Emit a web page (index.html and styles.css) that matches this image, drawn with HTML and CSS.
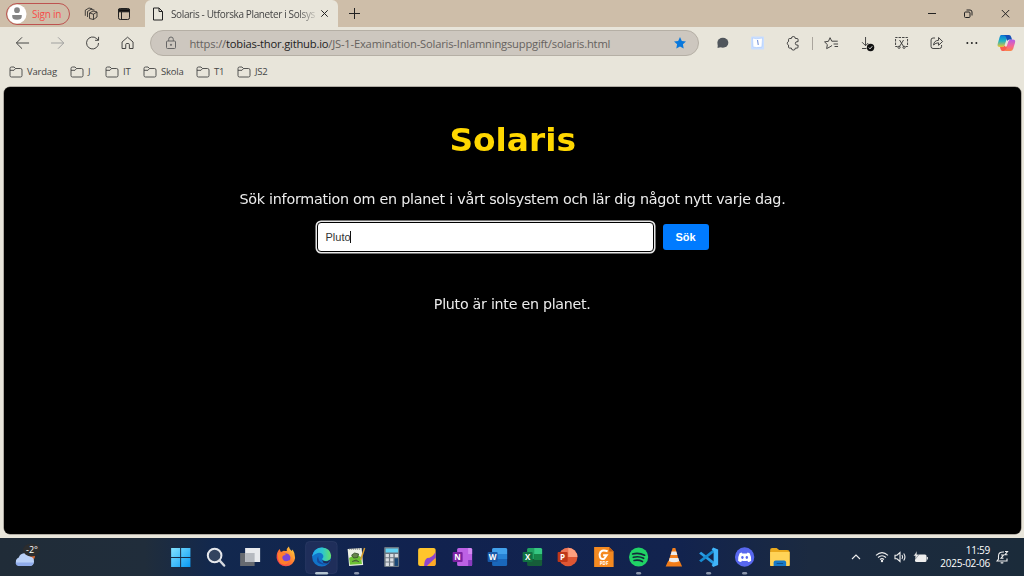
FILE: index.html
```html
<!DOCTYPE html>
<html lang="sv">
<head>
<meta charset="utf-8">
<title>Solaris - Utforska Planeter i Solsystemet</title>
<link rel="stylesheet" href="styles.css">
</head>
<body>
<header class="tabs">
  <div class="profile"><svg class="avatar" viewBox="0 0 21 21"><circle cx="10.5" cy="10.5" r="10" fill="#fff"/><circle cx="10.5" cy="6.5" r="3" fill="#858585"/><path d="M5.500 11.500h10v1.500a5 3.500 0 0 1-10 0z" fill="#858585"/></svg><span class="signin">Sign in</span></div>
  <svg class="ti workspaces" width="14" height="14" viewBox="0 0 14 14"><path d="M5.500 6l3.500-2 4 1v5l-3.500 2.500-4-1zM5.500 6l4 1.200L13 5M9.500 7.200v5.300M3.500 10V4.500L7 2.300l3.500.8M1.300 8.800V3.200L5 1l3.300.8"/></svg>
  <svg class="ti tabmenu" width="14" height="14" viewBox="0 0 14 14"><rect x="1.500" y="1.500" width="11" height="11" rx="1.800"/><path d="M1.500 2.200h11v2.600h-11z" fill="#111"/><path d="M4.500 5v7.500"/></svg>
  <div class="tab">
    <svg class="doc" width="12" height="14" viewBox="0 0 12 14"><path d="M1.500 1h5.500l3.500 3.500V13h-9zM7 1v3.500h3.500"/></svg>
    <span class="tabtitle">Solaris - Utforska Planeter i Solsys</span>
    <svg class="x" width="9" height="9" viewBox="0 0 9 9"><path d="M1.300 1.300l6.400 6.400M7.700 1.300L1.300 7.700"/></svg>
  </div>
  <svg class="plus" width="13" height="13" viewBox="0 0 13 13"><path d="M6.500 1v11M1 6.500h11"/></svg>
  <div class="winctl">
    <svg width="37" height="27" viewBox="0 0 37 27"><path d="M15 13.500h8"/></svg>
    <svg width="37" height="27" viewBox="0 0 37 27"><rect x="14.500" y="12" width="5.500" height="5.500" rx="1"/><path d="M16.500 10h3.500q2 0 2 2v3.500"/></svg>
    <svg width="37" height="27" viewBox="0 0 37 27"><path d="M14.800 10l7.400 7.400M22.200 10l-7.400 7.400"/></svg>
  </div>
</header>
<nav class="toolbar">
  <div class="cells">
    <svg viewBox="0 0 35 32"><path d="M24 16H11.500M17 10.300L11.300 16l5.700 5.700"/></svg>
    <svg class="dim" viewBox="0 0 35 32"><path d="M11 16h12.500M18 10.300l5.700 5.700-5.700 5.700"/></svg>
    <svg viewBox="0 0 35 32"><path d="M23.500 16a6 6 0 1 1-2-4.500l1.700 1.500M23.500 9.800v3.500H20"/></svg>
    <svg viewBox="0 0 35 32"><path d="M12 15l5.500-4.800L23 15v6.500h-3.700v-4q0-1-1-1h-1.600q-1 0-1 1v4H12z"/></svg>
  </div>
  <div class="address">
    <svg class="lock" width="12" height="14" viewBox="0 0 12 14"><rect x="1.500" y="5" width="9" height="7.500" rx="1"/><path d="M3.700 5V3.300a2.300 2.300 0 0 1 4.600 0V5"/><circle cx="6" cy="8.800" r=".6" fill="#555"/></svg>
    <span class="url">https://<b>tobias-thor.github.io</b>/JS-1-Examination-Solaris-Inlamningsuppgift/solaris.html</span>
    <svg class="star" width="14" height="14" viewBox="0 0 14 14"><path d="M7 1l1.800 3.900 4.200.5-3.100 2.900.8 4.200L7 10.400l-3.700 2.100.8-4.200L1 5.400l4.200-.5z"/></svg>
  </div>
  <div class="cells">
    <svg viewBox="0 0 35 32"><ellipse cx="17.800" cy="15.700" rx="5.500" ry="5" fill="#50565c" stroke="none"/><path d="M12.800 17l-.3 4 4-1z" fill="#50565c" stroke="none"/></svg>
    <svg viewBox="0 0 35 32"><rect x="11" y="9.500" width="13" height="13" rx="1" fill="#c9deff" stroke="none"/><path d="M12.500 11l4 .8 6-.7-.7 9-5.500.5-3.300-.7z" fill="#fff" stroke="#9dc0fa" stroke-width=".5"/><path d="M17.500 13l.7 5" stroke="#587bd0"/></svg>
    <svg viewBox="0 0 35 32"><path d="M14.500 11.500h1.800a2 2 0 0 1 4 0h1.700q1 0 1 1v2.200h-1a1.700 1.700 0 0 0 0 3.400h1v2q0 1-1 1h-1.700a2 2 0 0 1-4 0h-1.800q-1 0-1-1v-2a1.900 1.900 0 0 1 0-3.600v-2q0-1 1-1z"/></svg>
    <i class="divider"></i>
    <svg viewBox="0 0 35 32"><path d="M18 18.500l-2 1.300-3.400 1.800.7-4-2.800-2.700 3.900-.6L16 10.700l1.700 3.500h6M19.500 17H24M20.500 19.500H24"/></svg>
    <svg viewBox="0 0 35 32"><path d="M16.500 10v8.500M13 15.200l3.500 3.500 2.700-2.700M13 21.500h4.500"/><circle cx="21.500" cy="20.500" r="3.700" fill="#111" stroke="none"/><path d="M19.800 20.600l1.200 1.200 2.200-2.500" stroke="#fff"/></svg>
    <svg viewBox="0 0 35 32"><path d="M13.500 19.500h-2V10.500h12v9h-2" stroke-dasharray="2.500 1"/><path d="M15.500 13l4 6.500M19.500 13l-4 6.500"/><circle cx="15" cy="20.300" r="1.100"/><circle cx="20" cy="20.300" r="1.100"/></svg>
    <svg viewBox="0 0 35 32"><path d="M16 11h-2q-2 0-2 2v6.500q0 2 2 2h6.500q2 0 2-2V18M14.500 18q.5-4.500 5-4.700v-2.800l4 4-4 3.800v-2.500q-3 0-5 2.200z"/></svg>
    <svg viewBox="0 0 35 32"><g fill="#222" stroke="none"><circle cx="13.300" cy="16" r="1"/><circle cx="17.800" cy="16" r="1"/><circle cx="22.300" cy="16" r="1"/></g></svg>
    <svg class="copilot" viewBox="0 0 35 32"><defs><linearGradient id="ca" x2="0" y2="1"><stop stop-color="#087bd8"/><stop offset=".5" stop-color="#20b4c3"/><stop offset="1" stop-color="#efc52d"/></linearGradient><linearGradient id="cb" x2="0" y2="1"><stop stop-color="#b35ce9"/><stop offset=".55" stop-color="#f2659a"/><stop offset="1" stop-color="#fb8445"/></linearGradient></defs><g stroke="none"><path d="M12 8h7l-3.500 10.500q-.6 1.500-2.500 1.500h-2q-3.300 0-2.200-3.500l1.700-6Q11 8 12 8z" fill="url(#ca)"/><path d="M16 24h5.500q2 0 2.700-2.300l1.800-6q.8-3.200-2.200-3.200h-2q-1.700 0-2.300 1.600L16 24z" fill="url(#cb)"/><path d="M12 8h8q1.700 0 2.200 1.900l.8 2.600h-2.500q-1.800 0-2.400 1.500L17 10q-.5-2-5-2z" fill="#144fb8"/><path d="M13 20q2 0 2.400-1.500L17 20l1.500-1L17 22.500Q16.500 24 14.500 24h-1q-1.500 0-2-2l-.5-2z" fill="#fa5d4e"/></g></svg>
  </div>
</nav>
<div class="bookmarks">
  <span class="bm b1"><svg viewBox="0 0 14 12"><path d="M1 2.500Q1 1 2.500 1H5l1.500 1.500h5Q13 2.500 13 4v5.500q0 1.500-1.500 1.500h-9Q1 11 1 9.500zM1 4.300h4l1.500-1.800"/></svg>Vardag</span>
  <span class="bm b2"><svg viewBox="0 0 14 12"><path d="M1 2.500Q1 1 2.500 1H5l1.500 1.500h5Q13 2.500 13 4v5.500q0 1.500-1.500 1.500h-9Q1 11 1 9.500zM1 4.300h4l1.500-1.800"/></svg>J</span>
  <span class="bm b3"><svg viewBox="0 0 14 12"><path d="M1 2.500Q1 1 2.500 1H5l1.500 1.500h5Q13 2.500 13 4v5.500q0 1.500-1.500 1.500h-9Q1 11 1 9.500zM1 4.300h4l1.500-1.800"/></svg>IT</span>
  <span class="bm b4"><svg viewBox="0 0 14 12"><path d="M1 2.500Q1 1 2.500 1H5l1.500 1.500h5Q13 2.500 13 4v5.500q0 1.500-1.500 1.500h-9Q1 11 1 9.500zM1 4.300h4l1.500-1.800"/></svg>Skola</span>
  <span class="bm b5"><svg viewBox="0 0 14 12"><path d="M1 2.500Q1 1 2.500 1H5l1.500 1.500h5Q13 2.500 13 4v5.500q0 1.500-1.500 1.500h-9Q1 11 1 9.500zM1 4.300h4l1.500-1.800"/></svg>T1</span>
  <span class="bm"><svg viewBox="0 0 14 12"><path d="M1 2.500Q1 1 2.500 1H5l1.500 1.500h5Q13 2.500 13 4v5.500q0 1.500-1.500 1.500h-9Q1 11 1 9.500zM1 4.300h4l1.500-1.800"/></svg>JS2</span>
</div>
<main class="page">
  <h1>Solaris</h1>
  <p class="intro">Sök information om en planet i vårt solsystem och lär dig något nytt varje dag.</p>
  <div class="search"><div class="field">Pluto<i class="caret"></i></div><button class="go">Sök</button></div>
  <p class="result">Pluto är inte en planet.</p>
</main>
<footer class="taskbar">
  <div class="weather"><svg width="34" height="30" viewBox="0 0 34 30"><circle cx="17" cy="14" r="5" fill="#d96b32"/><path d="M6 24a4.500 4.500 0 0 1-.2-8.500 6 6 0 0 1 11-1A4.800 4.800 0 0 1 17 24z" fill="#b9d0f8"/><path d="M2.500 20.500h18Q20 24 16.500 24H6q-3 0-3.500-3.500z" fill="#8fabea"/><ellipse cx="18.500" cy="8" rx="8.500" ry="6.500" fill="#2c2d2e"/></svg><span class="temp">-2°</span></div>
  <div class="apps">
    <svg viewBox="0 0 35 38"><defs><linearGradient id="wg" x2="1" y2="1"><stop stop-color="#84e3ff"/><stop offset="1" stop-color="#0799f5"/></linearGradient></defs><path d="M8 10h9v9H8zM18 10h9.300v9H18zM8 20h9v9H8zM18 20h9.300v9H18z" fill="url(#wg)"/></svg>
    <svg viewBox="0 0 35 38"><circle cx="16.500" cy="17.500" r="6.800" fill="#33445f" stroke="#e6e8ec" stroke-width="2"/><path d="M21.500 22.500l4.500 5" stroke="#d5d9df" stroke-width="2.500" stroke-linecap="round"/></svg>
    <svg viewBox="0 0 35 38"><path d="M7 15h14.500v13H7z" fill="#666a70"/><path d="M12 10h15v14H12z" fill="#e8eaed"/><path d="M12 15h9.500v9H12z" fill="#b6bac0"/></svg>
    <svg viewBox="0 0 35 38"><defs><linearGradient id="ff" x1="1" x2="0" y2="1"><stop stop-color="#ffe23e"/><stop offset=".5" stop-color="#ff7931"/><stop offset="1" stop-color="#ed285f"/></linearGradient></defs><path d="M9 15q1-2.500 2.500-4l1.200 3 3-1.200q1 .2 3 .2-.5-2.500 2-4.500.5 3 3 4.500l.8-1.500Q27 15 27 20a9.300 9.300 0 0 1-18.500 0q-.2-3 .5-5z" fill="url(#ff)"/><circle cx="18" cy="19.800" r="4.300" fill="#7946d8"/><path d="M10 15q5-1 8 2-5 0-3.500 4 2 4 7 1-3 7-9 3.500Q9 22 10 15z" fill="#ff7f2a"/></svg>
    <svg viewBox="0 0 35 38"><defs><linearGradient id="ed" x2="1"><stop stop-color="#23a8ef"/><stop offset=".55" stop-color="#2ec7cc"/><stop offset="1" stop-color="#65df67"/></linearGradient></defs><rect x="1.500" y="3.500" width="31.500" height="32" rx="4" fill="#1f2e5a" stroke="#2d3c66" stroke-width=".7"/><circle cx="17.500" cy="19" r="9.500" fill="#1173c9"/><path d="M8 18Q10 9.500 18 9.500 26 10 27 17.500 27 23 21 23q-3-.2-3-2 2-1.500 1-4-3.500-5-11 1.500z" fill="url(#ed)"/><path d="M14 18q-4 7 4.500 8.500 4 .5 7-2-7 3-10.500-2-1-2-1-4.500z" fill="#174a9e"/><path d="M18 21.500q1 2 5 1.700l4-2q-3 6-8 3.300z" fill="#1f2e5a"/><rect x="11" y="34" width="13" height="2.500" rx="1.200" fill="#b4c4d0"/></svg>
    <svg viewBox="0 0 35 38"><path d="M8.500 11l14-1 1.500 17-14 1z" fill="#edf1e6"/><path d="M10 20q6-5 12-1l.8 7-12 .8z" fill="#6ec334"/><path d="M12.500 17l3-2 4 1-1 3.500-4 .5zM13 23.500l4-1.500 3 2" fill="#66854a" stroke="#344b2a" stroke-width=".8"/><path d="M25.500 10l-4 12" stroke="#db9e2d" stroke-width="1.500"/><path d="M10 11h12" stroke="#555" stroke-dasharray="1 1"/><rect x="15" y="34" width="5" height="2.500" rx="1.200" fill="#8994aa"/></svg>
    <svg viewBox="0 0 35 38"><rect x="10" y="9" width="15" height="20" rx="1" fill="#6b7681"/><path d="M11.500 10.500h12.500v4H11.500z" fill="#63d1f2"/><path d="M11.500 16h3.300v3.300h-3.300zM16 16h3.300v3.300H16zM20.600 16H24v3.300h-3.400zM11.500 20.300h3.300v3.300h-3.300zM16 20.300h3.300v3.300H16zM11.500 24.600h3.300v3.300h-3.300zM16 24.600h3.300v3.300H16z" fill="#d9dde2"/><path d="M20.600 20.300H24v7.600h-3.400z" fill="#194878"/></svg>
    <svg viewBox="0 0 35 38"><rect x="9" y="10" width="17.500" height="18" rx="2" fill="#ffc52d"/><path d="M26.500 14v6L18 28h-3q0-6 3-8 5 0 8.500-6z" fill="#8e45cf"/><path d="M26.500 20v6q0 2-2 2H18z" fill="#ffa927"/></svg>
    <svg viewBox="0 0 35 38"><rect x="12" y="10" width="15" height="18" rx="1.500" fill="#bd61e5"/><path d="M23 10h2.500q1.500 0 1.500 1.500V16h-4z" fill="#d389f3"/><path d="M23 22h4v4.500q0 1.500-1.500 1.500H23z" fill="#8b3bc0"/><rect x="7.500" y="14" width="10" height="10" rx="1" fill="#7d22a4"/><text x="12.500" y="21.600">N</text></svg>
    <svg viewBox="0 0 35 38"><rect x="12" y="10" width="15" height="18" rx="1.500" fill="#1a67bb"/><path d="M12 16v-4.500q0-1.500 1.500-1.500h12q1.500 0 1.500 1.500V16z" fill="#42a1eb"/><path d="M12 16h15v5H12z" fill="#2882d4"/><rect x="7.500" y="14" width="10" height="10" rx="1" fill="#1859a8"/><text x="12.500" y="21.600">W</text></svg>
    <svg viewBox="0 0 35 38"><rect x="12" y="10" width="15" height="18" rx="1.500" fill="#165d39"/><path d="M12 16v-4.500q0-1.500 1.500-1.500H19v11h-7z" fill="#20a363"/><path d="M19 10h6.500q1.500 0 1.500 1.500V16h-8z" fill="#35c782"/><path d="M19 16h8v6h-8z" fill="#178649"/><rect x="7.500" y="14" width="10" height="10" rx="1" fill="#117243"/><text x="12.500" y="21.600">X</text></svg>
    <svg viewBox="0 0 35 38"><circle cx="18" cy="19" r="9.300" fill="#df5734"/><path d="M18 9.700a9.300 9.300 0 0 1 9.300 9.300H18z" fill="#ffa07e"/><path d="M18 9.700V19H8.700A9.300 9.300 0 0 1 18 9.700z" fill="#ed7657"/><rect x="7.500" y="14" width="10" height="10" rx="1" fill="#bf3719"/><text x="12.500" y="21.600">P</text></svg>
    <svg viewBox="0 0 35 38"><path d="M8 9h15l4.500 4.500V29H8z" fill="#f58a20"/><path d="M23 9l4.500 4.500H23z" fill="#bb5c16"/><path d="M21.500 13.300q-7-2.500-8 3-.2 5.500 4.500 4.500l2.500-3.500H17" fill="none" stroke="#fff" stroke-width="2"/><text class="pdf" x="18" y="27">PDF</text></svg>
    <svg viewBox="0 0 35 38"><circle cx="17.500" cy="19" r="9.600" fill="#20d366"/><path d="M11.500 16q6-1.700 12 1.200M12.200 19.300q5.500-1.500 10.300 1M13 22.500q4.500-1 8.300 1" fill="none" stroke="#14283a" stroke-width="1.700" stroke-linecap="round"/><rect x="15" y="34" width="5" height="2.500" rx="1.200" fill="#8994aa"/></svg>
    <svg viewBox="0 0 35 38"><path d="M12 23h11.500l2.500 5.500H9.500z" fill="#f07b18"/><path d="M16.500 10h2.700l4 14q-5.500 3-11 0z" fill="#f5811e"/><path d="M15.500 13.500h4.700l1 3.500h-6.700zM13.500 20h8.700l1 3.200q-5.300 2-10.500 0z" fill="#ececeb"/></svg>
    <svg viewBox="0 0 35 38"><path d="M8 15.500l2-1.700L24 24.500v3.500z" fill="#279de5"/><path d="M8 22.500l2 1.700L24 13.500V10z" fill="#178bd1"/><path d="M22 9.500l5 2v15.500l-5 2-1.500-2 2-2V13l-2-1.500z" fill="#40b5fa"/><rect x="15" y="34" width="5" height="2.500" rx="1.200" fill="#8994aa"/></svg>
    <svg viewBox="0 0 35 38"><circle cx="17.500" cy="19" r="9.700" fill="#5867ee"/><path d="M14.500 14.500l-2 .8q-2 4-1.500 7.500 1.500 1.300 3 1.300l.8-1.300q2.700.5 5.400 0l.8 1.300q1.500 0 3-1.300.4-4-1.500-7.500l-2-.8-.7 1h-4.600z" fill="#fff"/><ellipse cx="15.300" cy="19.500" rx="1.200" ry="1.400" fill="#5867ee"/><ellipse cx="19.700" cy="19.500" rx="1.200" ry="1.400" fill="#5867ee"/><rect x="15" y="34" width="5" height="2.500" rx="1.200" fill="#8994aa"/></svg>
    <svg viewBox="0 0 35 38"><path d="M8 12q0-2 2-2h4.500l2.500 2H25q2.500 0 2.500 2v14H8z" fill="#e9a91d"/><path d="M8 14h19.500v12.500q0 1.500-1.500 1.500H9.500Q8 28 8 26.500z" fill="#ffd357"/><path d="M11.500 28v-3.500q0-2 2-2h8.500q2 0 2 2V28z" fill="#1779c8"/><path d="M14.500 25.500h6.500" stroke="#105188"/></svg>
  </div>
  <div class="tray">
    <svg class="chev" width="10" height="8" viewBox="0 0 10 8"><path d="M1 6l4-4 4 4"/></svg>
    <svg class="wifi" width="14" height="12" viewBox="0 0 14 12"><path d="M1 4.300q6-5.500 12 0M3 6.500q4-3.500 8 0M5 8.500q2-1.700 4 0"/><circle cx="7" cy="10" r="1.200" fill="#eee" stroke="none"/></svg>
    <svg class="vol" width="13" height="12" viewBox="0 0 13 12"><path d="M1 4.200h2L6 1.500v9L3 7.800H1zM8 4q1.300 2 0 4M9.700 2.500q2.500 3.500 0 7"/></svg>
    <svg class="bat" width="15" height="13" viewBox="0 0 15 13"><rect x="2" y="3.500" width="11.500" height="7.500" rx="1.500" fill="#eee" stroke="none"/><path d="M14.300 6v2.500"/><path d="M4 0L.5 5h2.300L2 8.500 6 3.500H3.800z" fill="#eee" stroke="#1c2b3a" stroke-width=".4"/></svg>
    <div class="clock"><span>11:59</span><span class="date">2025-02-06</span></div>
    <svg class="bell" width="13" height="14" viewBox="0 0 13 14"><path d="M8 2Q2.500 1.500 2.500 6v3L1 11h10V8.500M4.700 12.500q1.300 1 2.600 0M5 5h2.500L5 8.300h2.500M9 1.500h2.500L9 4.700h2.500"/></svg>
  </div>
</footer>
</body>
</html>
```
FILE: styles.css
```css
* { box-sizing: border-box; }
body { margin: 0; width: 1024px; height: 576px; overflow: hidden; background: #e8e5da; font-family: "Open Sans", "Noto Sans", sans-serif; color: #444; display: flex; flex-direction: column; }
svg { display: block; flex: none; fill: none; }
.tabs { height: 27px; flex: none; background: #cebea9; display: flex; align-items: center; }
.tabs svg { stroke: #222; stroke-width: 1; }
.tabs .workspaces { stroke-width: .8; }
.profile { width: 64px; height: 22px; margin-left: 6px; border: 1px solid #bd5350; border-radius: 11px; display: flex; align-items: center; }
.tabs .avatar { width: 20px; height: 20px; stroke: none; }
.signin { color: #f64d49; font-size: 10px; margin-left: 5px; white-space: nowrap; letter-spacing: -.25px; }
.workspaces { margin-left: 14px; }
.tabmenu { margin-left: 19px; }
.tab { width: 193px; height: 27px; margin-left: 14px; background: #e8e5da; border-radius: 6px 6px 0 0; display: flex; align-items: center; }
.doc { margin-left: 7px; }
.tabtitle { width: 144px; margin-left: 7px; font-size: 10px; letter-spacing: -.37px; white-space: nowrap; -webkit-mask-image: linear-gradient(90deg, #000 88%, rgba(0,0,0,.2)); mask-image: linear-gradient(90deg, #000 88%, rgba(0,0,0,.2)); }
.x { margin-left: 5px; }
.plus { margin-left: 10px; }
.winctl { margin-left: auto; display: flex; }
.toolbar { height: 32px; flex: none; display: flex; align-items: center; padding-left: 5px; }
.cells { display: flex; align-items: center; }
.cells svg { width: 35.100px; height: 32px; stroke: #333; stroke-width: .9; stroke-linejoin: round; }
.cells .dim { stroke: #999; }
.cells .copilot { width: 35px; }
.divider { width: 1px; height: 13px; background: #aaa59d; margin: 0 1px 0 1px; }
.address { width: 550px; height: 26px; margin: 0 5px; border: 1px solid #b5afa5; border-radius: 13px; background: #cdc7bf; display: flex; align-items: center; }
.address + .cells { margin-left: 1px; }
.lock { margin-left: 14px; stroke: #666; }
.url { width: 460px; margin-left: 12px; font-size: 11.200px; letter-spacing: -.2px; white-space: nowrap; color: #66625e; }
.url b { font-weight: 400; color: #222; }
.star { margin-left: 24px; fill: #0878dd; }
.bookmarks { height: 28px; flex: none; padding: 0 0 3px 9px; display: flex; align-items: center; font-size: 9.500px; letter-spacing: -.2px; }
.bm { display: flex; align-items: center; gap: 4px; height: 20px; }
.bm svg { width: 14px; height: 12px; stroke: #444; stroke-width: .9; }
.b1 { width: 61px; } .b2 { width: 35px; } .b3 { width: 38px; } .b4 { width: 53px; } .b5 { width: 41px; }
.page { height: 447px; flex: none; margin: 0 3px 0 4px; border-radius: 6px; background: #000; display: flex; flex-direction: column; align-items: center; font-family: "DejaVu Sans", sans-serif; color: #ececec; box-shadow: 0 0 0 .5px #77736d; }
h1 { margin: 33px 0 0; font-size: 32px; line-height: 40px; color: #ffd700; transform: scaleX(1.025); }
.page p { margin: 0; font-size: 13.300px; line-height: 20px; white-space: nowrap; letter-spacing: -.25px; transform: scaleX(1.077); }
.page .intro { margin-top: 30px; }
.search { display: flex; align-items: center; gap: 9px; margin-top: 12px; }
.field { width: 337px; height: 30px; border: 1px solid #000; border-radius: 4px; background: #fff; box-shadow: 0 0 0 1.500px #e8e8e8; color: #333; font: 11px/28px "Liberation Sans", sans-serif; padding-left: 8px; display: flex; align-items: center; }
.caret { width: 1px; height: 12px; margin-left: -1px; background: #111; }
.go { width: 46px; height: 26px; border: 0; border-radius: 3px; padding: 0; background: #007bff; color: #fff; font: bold 11px "Liberation Sans", sans-serif; }
.page .result { margin-top: 43px; transform: scaleX(1.07); }
.taskbar { height: 38px; flex: none; margin-top: 4px; background: linear-gradient(90deg, #202c38 0, #202d3b 145px, #12284e 215px, #11224f 420px, #12234e 680px, #1b2a40 810px, #1b2b3a 100%); display: flex; align-items: center; }
.weather { width: 162.500px; height: 38px; padding-left: 13px; display: grid; align-items: start; }
.weather svg { grid-area: 1 / 1; margin-top: 4px; }
.temp { grid-area: 1 / 1; color: #fff; font-size: 9px; line-height: 12px; margin: 6px 0 0 13px; }
.apps { display: flex; }
.apps svg { width: 35.260px; height: 38px; }
.apps text { font: bold 8px "Open Sans", sans-serif; fill: #fff; text-anchor: middle; }
.apps .pdf { font-size: 4.500px; }
.tray { margin-left: auto; display: flex; align-items: center; padding-right: 15px; }
.tray svg { stroke: #eee; stroke-width: 1.100; }
.wifi { margin-left: 14px; }
.vol { margin-left: 5px; }
.bat { margin-left: 6px; }
.clock { width: 62px; display: flex; flex-direction: column; align-items: flex-end; font-size: 10px; line-height: 13px; color: #fff; letter-spacing: -.25px; }
.bell { margin-left: 6px; }
```
